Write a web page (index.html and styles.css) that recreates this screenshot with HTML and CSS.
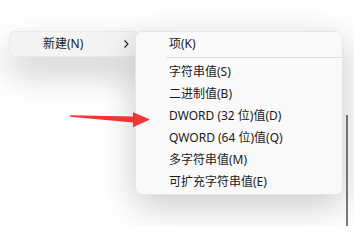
FILE: index.html
```html
<!DOCTYPE html>
<html lang="zh-CN">
<head>
<meta charset="utf-8">
<link rel="stylesheet" href="styles.css">
</head>
<body>
<div class="stage">
  <div class="parent-item">
    <span class="parent-label">新建(N)</span>
    <svg class="chevron" width="8" height="10" viewBox="0 0 8 10"><path d="M2.5 1.5 L6 5 L2.5 8.5" fill="none" stroke="#1f1f1f" stroke-width="1.1"/></svg>
  </div>
  <div class="submenu">
    <div class="item">项(K)</div>
    <div class="sep"></div>
    <div class="item">字符串值(S)</div>
    <div class="item">二进制值(B)</div>
    <div class="item">DWORD (32 位)值(D)</div>
    <div class="item">QWORD (64 位)值(Q)</div>
    <div class="item">多字符串值(M)</div>
    <div class="item">可扩充字符串值(E)</div>
  </div>
  <div class="scrollbar"></div>
  <svg class="arrow" width="354" height="226" viewBox="0 0 354 226">
    <polygon points="70,115.2 133,116.5 133,112.3 150,119.5 133,127.3 133,122.6 70,116.8" fill="#f23434"/>
  </svg>
</div>
</body>
</html>
```
FILE: styles.css
```css
html, body {
  margin: 0;
  padding: 0;
  background: #ffffff;
}
.stage {
  position: relative;
  width: 354px;
  height: 226px;
  overflow: hidden;
  display: flex;
  align-items: flex-start;
  padding: 31px 0 0 9px;
  box-sizing: border-box;
  font-family: "Noto Sans", "Noto Sans CJK SC", sans-serif;
  font-size: 12px;
  color: #1b1b1b;
  background: #ffffff;
}
.parent-item {
  flex: 0 0 auto;
  width: 130px;
  height: 26px;
  margin-right: -4px;
  box-sizing: border-box;
  border: 1px solid #e9e9e9;
  border-radius: 6px;
  background: #f4f4f4;
  display: flex;
  align-items: center;
  padding-left: 33px;
  box-shadow: 0 16px 34px rgba(0,0,0,0.22);
}
.parent-label {
  flex: 1 1 auto;
  line-height: 14px;
}
.chevron {
  flex: 0 0 auto;
  margin-right: 8px;
}
.submenu {
  position: relative;
  flex: 0 0 auto;
  width: 208px;
  height: 164px;
  box-sizing: border-box;
  border: 1px solid #e6e6e6;
  border-radius: 7px;
  background: #f9f9f9;
  padding: 1px 0;
  box-shadow: 0 10px 36px rgba(0,0,0,0.22);
}
.item {
  height: 22px;
  line-height: 22px;
  padding-left: 33px;
  white-space: nowrap;
}
.sep {
  height: 1px;
  margin: 2px 0 3px 30px;
  background: #d9d9d9;
}
.scrollbar {
  flex: 0 0 auto;
  width: 2px;
  height: 120px;
  margin: 84px 0 0 3px;
  background: #7d7d7d;
}
.arrow {
  position: absolute;
  left: 0;
  top: 0;
}
```
